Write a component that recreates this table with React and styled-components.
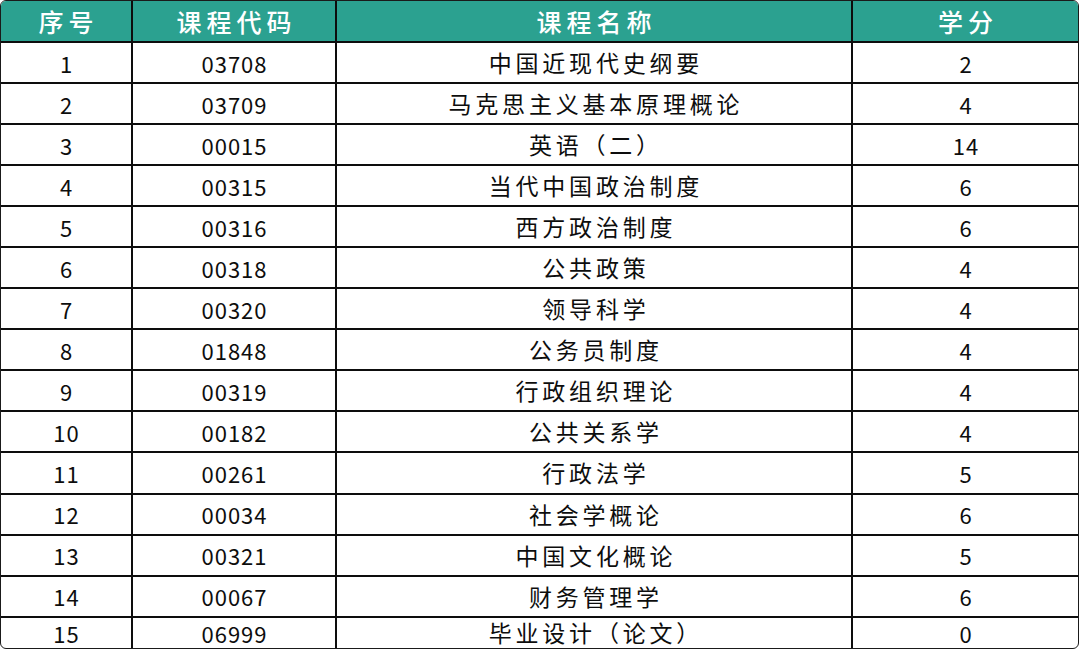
import React from "react";
import styled, { createGlobalStyle } from "styled-components";

const Global = createGlobalStyle`
  html, body { margin: 0; padding: 0; background: #ffffff; }
  body { font-family: "Noto Sans CJK SC", "Noto Sans", sans-serif; }
`;

const Frame = styled.div`
  width: 1080px;
  height: 650px;
  box-sizing: border-box;
  padding: 0 1px 1px 0;
`;

const Table = styled.table`
  width: 1079px;
  height: 649px;
  border-collapse: separate;
  border-spacing: 0;
  table-layout: fixed;
  border: 1.5px solid #1a1a1a;
  border-radius: 6px;
  overflow: hidden;
  box-sizing: border-box;
`;

const HeadCell = styled.th`
  background: #2ba190;
  color: #ffffff;
  font-weight: 500;
  font-size: 25px;
  letter-spacing: 5px;
  text-indent: 5px;
  height: 40px;
  padding: 0;
  line-height: 1;
  border-right: ${(p) => (p.$last ? "none" : "2.5px solid #0d0d0d")};
  border-bottom: 2.5px solid #0d0d0d;
`;

const Cell = styled.td`
  color: #0d0d0d;
  font-size: ${(p) => (p.$cjk ? "23px" : "22px")};
  text-align: center;
  padding: 0;
  line-height: 1;
  height: ${(p) => (p.$short ? "30px" : "38.6px")};
  letter-spacing: ${(p) => (p.$cjk ? "3.8px" : "1px")};
  text-indent: ${(p) => (p.$cjk ? "3.8px" : "1px")};
  border-right: ${(p) => (p.$last ? "none" : "2.5px solid #0d0d0d")};
  border-bottom: ${(p) => (p.$short ? "none" : "2.5px solid #0d0d0d")};
`;

const rows = [
  ["1", "03708", "中国近现代史纲要", "2"],
  ["2", "03709", "马克思主义基本原理概论", "4"],
  ["3", "00015", "英语（二）", "14"],
  ["4", "00315", "当代中国政治制度", "6"],
  ["5", "00316", "西方政治制度", "6"],
  ["6", "00318", "公共政策", "4"],
  ["7", "00320", "领导科学", "4"],
  ["8", "01848", "公务员制度", "4"],
  ["9", "00319", "行政组织理论", "4"],
  ["10", "00182", "公共关系学", "4"],
  ["11", "00261", "行政法学", "5"],
  ["12", "00034", "社会学概论", "6"],
  ["13", "00321", "中国文化概论", "5"],
  ["14", "00067", "财务管理学", "6"],
  ["15", "06999", "毕业设计（论文）", "0"],
];

export default function App() {
  return (
    <Frame>
      <Global />
      <Table>
        <colgroup>
          <col style={{ width: "132px" }} />
          <col style={{ width: "204px" }} />
          <col style={{ width: "516px" }} />
          <col />
        </colgroup>
        <thead>
          <tr>
            <HeadCell>序号</HeadCell>
            <HeadCell>课程代码</HeadCell>
            <HeadCell>课程名称</HeadCell>
            <HeadCell $last>学分</HeadCell>
          </tr>
        </thead>
        <tbody>
          {rows.map((r, i) => {
            const short = i === rows.length - 1;
            return (
              <tr key={r[0]}>
                <Cell $short={short}>{r[0]}</Cell>
                <Cell $short={short}>{r[1]}</Cell>
                <Cell $short={short} $cjk>{r[2]}</Cell>
                <Cell $short={short} $last>{r[3]}</Cell>
              </tr>
            );
          })}
        </tbody>
      </Table>
    </Frame>
  );
}
